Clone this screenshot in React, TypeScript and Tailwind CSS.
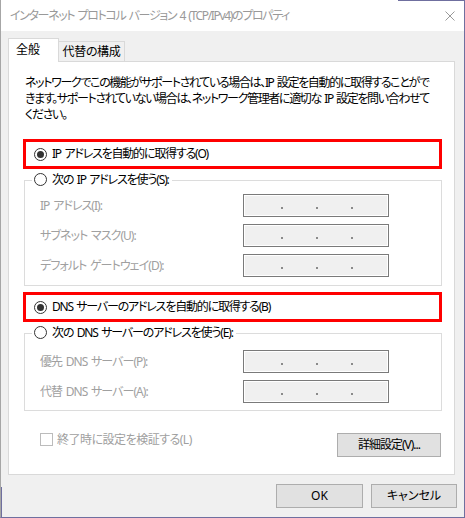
import React from "react";

const FONT = "font-['Noto_Sans','Noto_Sans_CJK_JP',sans-serif] [font-feature-settings:'palt'] [word-spacing:1.5px]";

function Radio({ checked }: { checked?: boolean }) {
  return (
    <span className="flex h-[13px] w-[13px] shrink-0 items-center justify-center rounded-full border border-[#333333] bg-white">
      {checked && <span className="h-[7px] w-[7px] rounded-full bg-[#333333]" />}
    </span>
  );
}

function IpBox() {
  return (
    <div className="flex h-[23px] w-[146px] items-start gap-[33px] border border-[#7a7a7a] bg-[#f0f0f0] pl-[37px] pt-[12px] shadow-[inset_0_0_0_1px_#ffffff]">
      <span className="h-[2px] w-[2px] bg-[#8a8a8a]" />
      <span className="h-[2px] w-[2px] bg-[#8a8a8a]" />
      <span className="h-[2px] w-[2px] bg-[#8a8a8a]" />
    </div>
  );
}

function FieldRow({ label }: { label: string }) {
  return (
    <div className="flex h-[23px] items-center">
      <span className="w-[203px] whitespace-nowrap leading-[16px] tracking-[-0.95px] text-[#a0a0a0]">{label}</span>
      <IpBox />
    </div>
  );
}

function RedOption({ label }: { label: string }) {
  return (
    <div className="ml-[14px] flex h-[30px] w-[419px] items-center gap-[5px] border-[3px] border-[#ff0000] pl-[8px]">
      <Radio checked />
      <span className="whitespace-nowrap leading-[16px] tracking-[-1.2px]">{label}</span>
    </div>
  );
}

function Legend({ label }: { label: string }) {
  return (
    <div className="relative z-10 ml-[23px] flex h-[13px] w-fit items-center gap-[5px] bg-white pl-[2px] pr-[3px]">
      <Radio />
      <span className="whitespace-nowrap leading-[13px] tracking-[-1.15px]">{label}</span>
    </div>
  );
}

function Btn({ label, className }: { label: string; className?: string }) {
  return (
    <div
      className={
        "flex h-[24px] items-center justify-center border border-[#adadad] bg-[#e1e1e1] leading-[16px] " +
        (className ?? "")
      }
    >
      {label}
    </div>
  );
}

export default function App() {
  return (
    <div
      className={`relative flex h-[518px] w-[465px] flex-col overflow-hidden border-b border-l border-r border-b-[#6f6f9f] border-l-[#a6a6a6] border-r-[#6f6f9f] bg-[#f0f0f0] text-[12px] text-black ${FONT}`}
    >
      {/* desktop edge fragments */}
      <div className="absolute right-0 top-0 h-px w-[66px] bg-[#6f6f9f]" />
      <div className="absolute bottom-0 left-0 h-[30px] w-px bg-[#6f6f9f]" />

      {/* title bar */}
      <div className="flex h-[31px] shrink-0 items-center justify-between bg-white pl-[9px] pr-[9px]">
        <span className="whitespace-nowrap leading-[16px] tracking-[-1.35px] text-[#999999]">
          インターネット プロトコル バージョン 4 (TCP/IPv4)のプロパティ
        </span>
        <svg width="10" height="10" viewBox="0 0 10 10" className="shrink-0">
          <path d="M0.5 0.5 L9.5 9.5 M9.5 0.5 L0.5 9.5" stroke="#999999" strokeWidth="1" fill="none" />
        </svg>
      </div>

      {/* body */}
      <div className="flex flex-1 flex-col pl-[7px] pt-[7px]">
        {/* tabs */}
        <div className="flex h-[23px] items-end">
          <div className="relative z-10 -mb-px flex h-[24px] w-[51px] items-center border border-b-0 border-[#d9d9d9] bg-white pb-[1px] pl-[7px] leading-[16px]">
            全般
          </div>
          <div className="flex h-[20px] w-[66px] items-center justify-center border-r border-t border-[#d9d9d9] leading-[16px] tracking-[-0.3px]">
            代替の構成
          </div>
        </div>

        {/* panel */}
        <div className="flex h-[414px] w-[447px] flex-col border border-[#d9d9d9] bg-white">
          <div className="ml-[16px] mt-[13px] whitespace-nowrap leading-[16px] tracking-[-1.35px]">
            ネットワークでこの機能がサポートされている場合は、IP 設定を自動的に取得することがで
            <br />
            きます。サポートされていない場合は、ネットワーク管理者に適切な IP 設定を問い合わせて
            <br />
            ください。
          </div>

          <div className="mt-[16px]">
            <RedOption label="IP アドレスを自動的に取得する(O)" />
          </div>

          <div className="mt-[4px]">
            <Legend label="次の IP アドレスを使う(S):" />
          </div>
          <div className="-mt-[6px] ml-[15px] flex h-[106px] w-[418px] flex-col gap-[7px] border border-[#dcdcdc] pl-[15px] pt-[13px]">
            <FieldRow label="IP アドレス(I):" />
            <FieldRow label="サブネット マスク(U):" />
            <FieldRow label="デフォルト ゲートウェイ(D):" />
          </div>

          <div className="mt-[6px]">
            <RedOption label="DNS サーバーのアドレスを自動的に取得する(B)" />
          </div>

          <div className="mt-[4px]">
            <Legend label="次の DNS サーバーのアドレスを使う(E):" />
          </div>
          <div className="-mt-[6px] ml-[15px] flex h-[78px] w-[418px] flex-col gap-[7px] border border-[#dcdcdc] pl-[15px] pt-[16px]">
            <FieldRow label="優先 DNS サーバー(P):" />
            <FieldRow label="代替 DNS サーバー(A):" />
          </div>

          <div className="mt-[22px] flex items-start pr-[13px]">
            <div className="ml-[31px] flex h-[13px] items-center gap-[4px]">
              <span className="h-[13px] w-[13px] shrink-0 border border-[#bcbcbc] bg-white" />
              <span className="whitespace-nowrap leading-[16px] tracking-[-0.5px] text-[#a0a0a0]">終了時に設定を検証する(L)</span>
            </div>
            <Btn label="詳細設定(V)..." className="ml-auto w-[104px] tracking-[-1px]" />
          </div>
        </div>

        {/* bottom buttons */}
        <div className="mt-[9px] flex justify-end gap-[8px] pr-[7px]">
          <Btn label="OK" className="w-[87px]" />
          <Btn label="キャンセル" className="w-[86px]" />
        </div>
      </div>
    </div>
  );
}
